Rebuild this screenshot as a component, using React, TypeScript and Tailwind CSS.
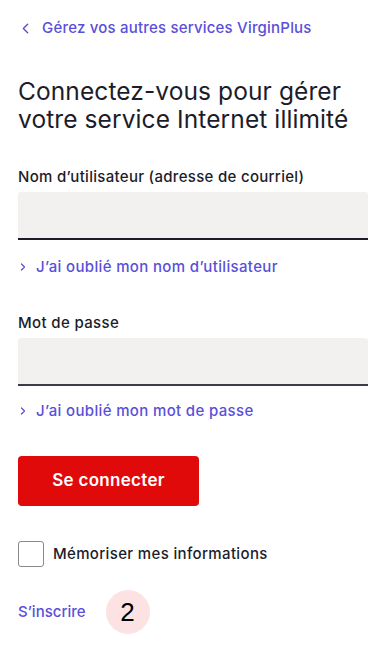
import { ChevronLeft, ChevronRight } from 'lucide-react';

export default function App() {
  return (
    <div
      className="min-h-screen bg-white text-[#1c1c2b] pl-[18px] pr-[22px]"
      style={{ fontFamily: 'Inter, "Noto Sans", sans-serif' }}
    >
      {/* Back link */}
      <a href="#" className="flex items-center h-[20px] mt-[18px] text-[#5b4fd9] text-[15px] tracking-[0.2px] font-medium">
        <ChevronLeft size={17} strokeWidth={2} className="mr-[8px] -ml-[1px]" />
        Gérez vos autres services VirginPlus
      </a>

      {/* Title */}
      <h1 className="mt-[39px] text-[24.5px] leading-[28px] font-normal tracking-[0.1px]">
        Connectez-vous pour gérer
        <br />
        votre service Internet illimité
      </h1>

      {/* Username */}
      <label className="block mt-[34px] text-[15px] tracking-[0.3px] leading-[20px] font-medium">
        Nom d’utilisateur (adresse de courriel)
      </label>
      <input
        type="text"
        className="block w-full mt-[5px] h-[48px] bg-[#f2f1f0] rounded-t-[3px] border-b-2 border-[#1c1c2b] outline-none"
      />
      <a href="#" className="flex items-center mt-[17px] h-[20px] text-[#5b4fd9] text-[15px] tracking-[0.35px] font-medium">
        <ChevronRight size={12} strokeWidth={2.5} className="mr-[7px] -ml-[1px]" />
        J’ai oublié mon nom d’utilisateur
      </a>

      {/* Password */}
      <label className="block mt-[36px] text-[15px] tracking-[0.35px] leading-[20px] font-medium">Mot de passe</label>
      <input
        type="password"
        className="block w-full mt-[5px] h-[48px] bg-[#f2f1f0] rounded-t-[3px] border-b-2 border-[#3a3d48] outline-none"
      />
      <a href="#" className="flex items-center mt-[15px] h-[20px] text-[#5b4fd9] text-[15px] tracking-[0.35px] font-medium">
        <ChevronRight size={12} strokeWidth={2.5} className="mr-[7px] -ml-[1px]" />
        J’ai oublié mon mot de passe
      </a>

      {/* Submit */}
      <button className="mt-[35px] w-[181px] h-[50px] rounded-[4px] bg-[#e10a0a] text-white text-[17px] tracking-[0.3px] font-semibold">
        Se connecter
      </button>

      {/* Remember */}
      <label className="flex items-center mt-[35px] gap-[9px]">
        <span className="w-[26px] h-[26px] border border-[#8a8a8a] rounded-[3px] bg-white" />
        <span className="text-[15px] tracking-[0.35px] font-medium">Mémoriser mes informations</span>
      </label>

      {/* Sign up */}
      <div className="flex items-center mt-[23px] h-[44px]">
        <a href="#" className="text-[#5b4fd9] text-[15px] font-medium">S’inscrire</a>
        <span
          className="ml-[20px] w-[44px] h-[44px] rounded-full bg-[#fde2e3] flex items-center justify-center text-black text-[26px]"
          style={{ fontFamily: '"Liberation Sans", Arial, sans-serif' }}
        >
          2
        </span>
      </div>
    </div>
  );
}
